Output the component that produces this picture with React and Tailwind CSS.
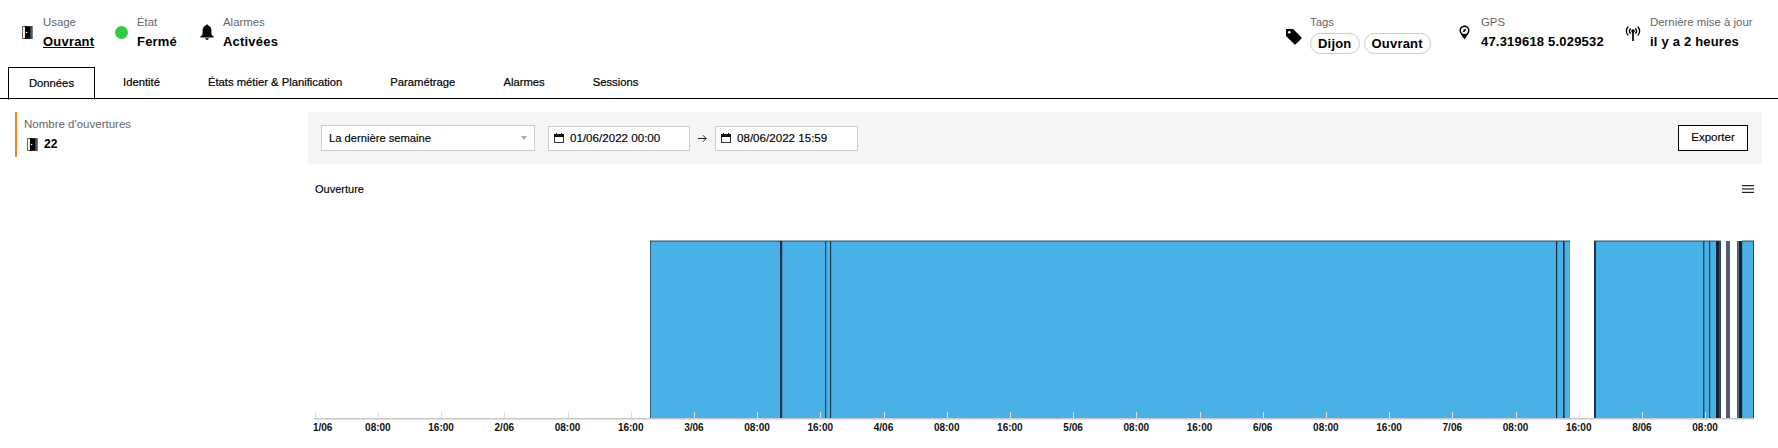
const font = { fontFamily: '"Liberation Sans", Arial, sans-serif' };

function Door({ className }) {
  return (
    <svg className={className} viewBox="0 0 12 14">
      <path d="M0.5 0.5H11.5V13.5H0.5Z" fill="#fff" stroke="#5a3a28" strokeWidth="1" />
      <path d="M3 0L11 1V13L3 14Z" fill="#000" />
      <rect x="1" y="1" width="2" height="12" fill="#fff" />
      <rect x="9" y="1" width="3" height="12" fill="#7ab8e8" opacity="0.5" />
      <circle cx="5" cy="7" r="0.9" fill="#fff" />
    </svg>
  );
}

function Bell({ className }) {
  return (
    <svg className={className} viewBox="0 0 14 16" fill="#000">
      <circle cx="7" cy="1.6" r="1.2" />
      <path d="M7 1.5C4 1.5 2.6 3.8 2.6 6.5V9.5C2.6 11 1.4 11.8 0.4 12.5V13.4H13.6V12.5C12.6 11.8 11.4 11 11.4 9.5V6.5C11.4 3.8 10 1.5 7 1.5Z" />
      <path d="M5.2 14.2H8.8C8.6 15.3 7.9 15.9 7 15.9C6.1 15.9 5.4 15.3 5.2 14.2Z" />
    </svg>
  );
}

function Tag({ className }) {
  return (
    <svg className={className} viewBox="0 0 17 17">
      <path d="M1 1H8L16.3 9.3C16.7 9.7 16.7 10.3 16.3 10.7L10.7 16.3C10.3 16.7 9.7 16.7 9.3 16.3L1 8Z" fill="#000" />
      <circle cx="4.2" cy="4.2" r="1.3" fill="#fff" />
    </svg>
  );
}

function Pin({ className }) {
  return (
    <svg className={className} viewBox="0 0 11 15">
      <path d="M5.5 14.5L1.6 8.8C0.9 7.8 0.5 6.7 0.5 5.6C0.5 2.7 2.7 0.5 5.5 0.5C8.3 0.5 10.5 2.7 10.5 5.6C10.5 6.7 10.1 7.8 9.4 8.8Z" fill="#000" />
      <circle cx="5.5" cy="5.5" r="3.5" fill="#fff" />
      <path d="M7.3 3.6L6.3 6.3L3.7 7.4L4.7 4.7Z" fill="#000" />
    </svg>
  );
}

function Antenna({ className }) {
  return (
    <svg className={className} viewBox="0 0 16 15" fill="none" stroke="#000" strokeWidth="1.3" strokeLinecap="round">
      <circle cx="8" cy="5" r="1.8" fill="#000" stroke="none" />
      <path d="M8 6V14.5" strokeWidth="1.7" />
      <path d="M5.3 2.8C4.3 4 4.3 6 5.3 7.3" />
      <path d="M10.7 2.8C11.7 4 11.7 6 10.7 7.3" />
      <path d="M2.9 1C0.9 3.2 0.9 6.9 2.9 9.1" />
      <path d="M13.1 1C15.1 3.2 15.1 6.9 13.1 9.1" />
    </svg>
  );
}

function Calendar() {
  return (
    <svg className="w-[10px] h-[10px] shrink-0" viewBox="0 0 10 10">
      <rect x="0.5" y="1.5" width="9" height="8" fill="#fff" stroke="#333" />
      <rect x="0" y="1" width="10" height="3" fill="#111" />
      <rect x="2" y="0" width="1" height="2" fill="#111" />
      <rect x="7" y="0" width="1" height="2" fill="#111" />
    </svg>
  );
}

function Stat({ label, children, icon, className }) {
  return (
    <div className={`flex items-start ${className || ""}`}>
      {icon}
      <div>
        <div className="text-[11.4px] leading-[14px] text-[#666666] whitespace-nowrap">{label}</div>
        {children}
      </div>
    </div>
  );
}

function Value({ children, underline }) {
  return (
    <div className={`text-[13px] leading-[16px] mt-[5px] font-bold text-black tracking-[0.2px] whitespace-nowrap ${underline ? "underline" : ""}`}>
      {children}
    </div>
  );
}

function Chip({ children }) {
  return (
    <span className="h-[21px] px-[7px] flex items-center rounded-full border border-[#cccccc] text-[13px] font-bold tracking-[0.2px] text-black">
      {children}
    </span>
  );
}

const tabs = ["Identité", "États métier & Planification", "Paramétrage", "Alarmes", "Sessions"];

const ticks = ["1/06","08:00","16:00","2/06","08:00","16:00","3/06","08:00","16:00","4/06","08:00","16:00","5/06","08:00","16:00","6/06","08:00","16:00","7/06","08:00","16:00","8/06","08:00"];

const blue = [
  [650, 1570],
  [1594, 1721],
  [1742, 1754],
];
const dark = [
  [650, 0.8, "#2c4a5c"],
  [780, 2.2, "#12303f"],
  [825, 1.2, "#1f3c4c"],
  [830, 1.2, "#1f3c4c"],
  [1556, 1.2, "#12303f"],
  [1563, 1.6, "#12303f"],
  [1594, 2, "#1c3a4b"],
  [1703, 1.4, "#1f4a60"],
  [1709, 1.2, "#1f4a60"],
  [1716, 3.6, "#14262f"],
  [1719.6, 1.4, "#2a4a5a"],
  [1726, 4, "#4d5f6b"],
  [1737, 1.6, "#4d5f6b"],
  [1738.6, 3.6, "#14262f"],
  [1753, 1, "#1f4a60"],
];

function Chart() {
  const x0 = 314.7;
  const step = 63.2;
  return (
    <svg className="block w-full h-[240px]" viewBox="308 210 1454 240">
      <g>
        {blue.map(([a, b]) => (
          <rect key={a} x={a} y={241} width={b - a} height={177} fill="#4ab1e6" />
        ))}
        {blue.map(([a, b]) => (
          <rect key={a} x={a} y={240.5} width={b - a} height={1.2} fill="#3c5a6c" />
        ))}
        {dark.map(([x, w, c]) => (
          <rect key={x} x={x} y={241} width={w} height={177} fill={c} />
        ))}
        {ticks.map((t, i) => (
          <rect key={i} x={Math.round(x0 + step * i)} y={412} width={1} height={6} fill="#d8dde9" />
        ))}
        <rect x={314} y={418} width={1440} height={1.5} fill="#c8c8cc" />
        {ticks.map((t, i) => (
          <text
            key={i}
            x={x0 + step * i + (i === 0 ? 8 : 0)}
            y={431}
            textAnchor="middle"
            fontSize="10"
            fontWeight="700"
            fill="#111"
            style={font}
          >
            {t}
          </text>
        ))}
      </g>
    </svg>
  );
}

export default function App() {
  return (
    <div className="w-[1778px] h-[448px] overflow-hidden bg-white text-black" style={font}>
      <header className="h-[67px] flex justify-between pt-[15px]">
        <div className="flex">
          <Stat label="Usage" className="ml-[22px] w-[93px]" icon={<Door className="w-[11px] h-[13px] mt-[11px] mr-[10px]" />}>
            <Value underline>Ouvrant</Value>
          </Stat>
          <Stat label="État" className="w-[85px]" icon={<span className="w-[13px] h-[13px] rounded-full bg-[#2ecc40] mt-[11px] mr-[9px] shrink-0" />}>
            <Value>Fermé</Value>
          </Stat>
          <Stat label="Alarmes" icon={<Bell className="w-[14px] h-[16px] mt-[9px] mr-[9px]" />}>
            <Value>Activées</Value>
          </Stat>
        </div>
        <div className="flex">
          <Stat label="Tags" className="w-[174px]" icon={<Tag className="w-[17px] h-[17px] mt-[13px] mr-[8px]" />}>
            <div className="flex gap-[4px] mt-[4px]">
              <Chip>Dijon</Chip>
              <Chip>Ouvrant</Chip>
            </div>
          </Stat>
          <Stat label="GPS" className="w-[166px]" icon={<Pin className="w-[11px] h-[15px] mt-[10px] mr-[11px]" />}>
            <Value>47.319618 5.029532</Value>
          </Stat>
          <Stat label="Dernière mise à jour" className="w-[153px]" icon={<Antenna className="w-[16px] h-[15px] mt-[11px] mr-[9px]" />}>
            <Value>il y a 2 heures</Value>
          </Stat>
        </div>
      </header>

      <nav className="h-[31px] flex pl-[8px] border-b border-black box-content">
        <div className="w-[85px] h-[31px] box-content border border-black border-b-white -mb-px flex items-center justify-center text-[11.25px] text-black [-webkit-text-stroke:0.2px_#000]">
          Données
        </div>
        <div className="flex ml-[4px]">
          {tabs.map((t) => (
            <div key={t} className="px-[24px] flex items-center justify-center text-[11.25px] text-black [-webkit-text-stroke:0.2px_#000]">
              {t}
            </div>
          ))}
        </div>
      </nav>

      <main className="flex pt-[13px]">
        <aside className="w-[308px] shrink-0 pl-[15px]">
          <div className="h-[45px] border-l-2 border-[#f58220] pl-[7px] pt-[5px]">
            <div className="text-[11.5px] leading-[14px] text-[#666666]">Nombre d'ouvertures</div>
            <div className="flex items-center mt-[4px] ml-[3px] gap-[6px]">
              <Door className="w-[11px] h-[13px]" />
              <span className="text-[12px] font-bold text-black">22</span>
            </div>
          </div>
        </aside>
        <section className="w-[1454px]">
          <div className="h-[52px] bg-[#f5f5f5] flex items-center pl-[13px] pr-[14px]">
            <div className="w-[214px] h-[26px] border border-[#cccccc] bg-white flex items-center justify-between pl-[7px] pr-[6px] text-[11.2px] text-black [-webkit-text-stroke:0.15px_#000]">
              <span>La dernière semaine</span>
              <span className="w-0 h-0 border-x-[3px] border-x-transparent border-t-[4px] border-t-[#aaaaaa] mr-[1px]" />
            </div>
            <div className="ml-[13px] w-[142px] h-[25px] border border-[#cccccc] bg-white flex items-center pl-[5px] gap-[6px] text-[11.6px] text-black [-webkit-text-stroke:0.15px_#000]">
              <Calendar />
              <span>01/06/2022 00:00</span>
            </div>
            <span className="w-[25px] flex justify-center">
              <svg className="w-[9px] h-[9px]" viewBox="0 0 9 9" fill="none" stroke="#222" strokeWidth="1">
                <path d="M0 4.5H8M5 1.3L8.2 4.5L5 7.7" />
              </svg>
            </span>
            <div className="w-[143px] h-[25px] border border-[#cccccc] bg-white flex items-center pl-[5px] gap-[6px] text-[11.6px] text-black [-webkit-text-stroke:0.15px_#000]">
              <Calendar />
              <span>08/06/2022 15:59</span>
            </div>
            <button className="ml-auto w-[70px] h-[26px] border border-black bg-white text-[11.5px] text-black [-webkit-text-stroke:0.15px_#000]">
              Exporter
            </button>
          </div>
          <div className="h-[46px] flex items-center justify-between pt-[4px] pl-[7px] pr-[8px] text-[11px] text-black [-webkit-text-stroke:0.15px_#000]">
            <span>Ouverture</span>
            <svg className="w-[12px] h-[10px]" viewBox="0 0 12 10" fill="#222">
              <rect y="1" width="12" height="1.2" />
              <rect y="4.4" width="12" height="1.2" />
              <rect y="7.8" width="12" height="1.2" />
            </svg>
          </div>
          <Chart />
        </section>
      </main>
    </div>
  );
}
